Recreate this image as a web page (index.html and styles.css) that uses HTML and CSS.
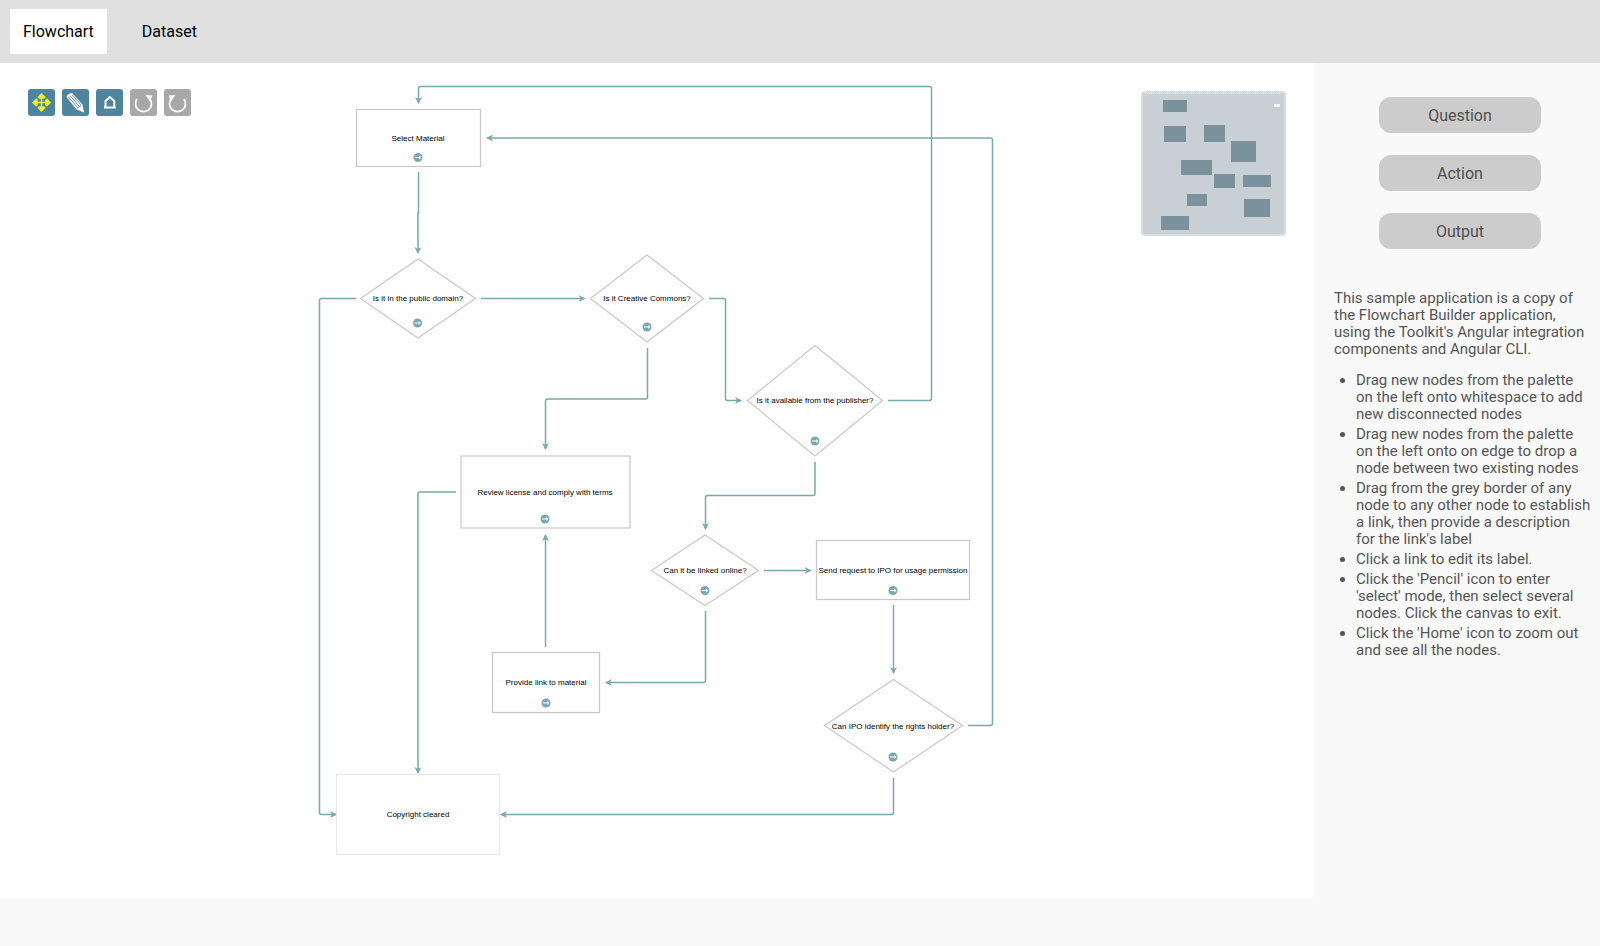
FILE: index.html
```html
<!DOCTYPE html>
<html lang="en">
<head>
<meta charset="utf-8">
<title>Flowchart Builder</title>
<link rel="stylesheet" href="styles.css">
</head>
<body>
<nav class="tabs">
  <a class="tab tab-active" href="#flowchart">Flowchart</a>
  <a class="tab" href="#dataset">Dataset</a>
</nav>
<div class="workspace">
  <main class="canvas">
    <svg class="diagram" role="img" aria-label="Copyright clearance flowchart">
      <defs>
        <marker id="arrow" markerWidth="8" markerHeight="8" refX="6" refY="4" orient="auto" markerUnits="userSpaceOnUse">
          <path class="arrow-head" d="M0 .5L7 4L0 7.500L2 4Z"/>
        </marker>
        <g id="connect">
          <circle class="connect-disc" r="4.5"/>
          <path class="connect-arrow" d="M-3 0H2M1 -1.5L3 0L1 1.5"/>
        </g>
      </defs>
      <g class="edges" transform="translate(0 -63)">
        <path d="M888 400.5H929.5Q931.5 400.5 931.5 398.5V88.500Q931.5 86.500 929.5 86.500H420.500Q418.500 86.500 418.500 88.500V103"/>
        <path d="M968 725.5H990.5Q992.5 725.5 992.5 723.5V140Q992.5 138 990.5 138H487"/>
        <path d="M418.500 172V213H418V253"/>
        <path d="M356 298.5H321.500Q319.500 298.5 319.500 300.5V812.5Q319.500 814.5 321.500 814.5H336"/>
        <path d="M481 298.5H584.500"/>
        <path d="M647.500 348V397Q647.500 399 645.500 399H547.500Q545.500 399 545.500 401V449"/>
        <path d="M709 298.5H723.500Q725.500 298.5 725.500 300.5V398.5Q725.500 400.5 727.500 400.5H741"/>
        <path d="M815 462V493.5Q815 495.5 813 495.5H707.500Q705.500 495.5 705.500 497.5V529"/>
        <path d="M456 492H420Q418 492 418 494V773"/>
        <path d="M545.500 647V535"/>
        <path d="M764 570.500H810.500"/>
        <path d="M705.500 611V680.500Q705.500 682.500 703.500 682.500H606"/>
        <path d="M893.500 605V673"/>
        <path d="M893.500 778V812.5Q893.500 814.5 891.500 814.5H501"/>
      </g>
      <g class="nodes" transform="translate(0 -63)">
        <rect x="356.500" y="109.500" width="124" height="57"/>
        <path d="M418 259L475.500 298.500L418 338L360.500 298.500Z"/>
        <path d="M647 255L703.500 298.500L647 342L590.500 298.500Z"/>
        <path d="M815 345.500L882.500 400.500L815 456L747.500 400.500Z"/>
        <rect x="461" y="456" width="169" height="72"/>
        <rect x="492.500" y="652.500" width="107" height="60"/>
        <path d="M705 535L758.500 570.500L705 605.500L651.500 570.500Z"/>
        <rect x="816.500" y="540.500" width="153" height="59"/>
        <path d="M893.500 679.500L962.500 725.500L893.500 772L824.500 725.500Z"/>
        <rect class="output-node" x="336.500" y="774.500" width="163" height="80"/>
      </g>
      <g transform="translate(0 -63)">
        <use href="#connect" x="418" y="157.500"/>
        <use href="#connect" x="417.500" y="323"/>
        <use href="#connect" x="647" y="327"/>
        <use href="#connect" x="815" y="441"/>
        <use href="#connect" x="545" y="519"/>
        <use href="#connect" x="546" y="703"/>
        <use href="#connect" x="705" y="590.500"/>
        <use href="#connect" x="893" y="590.500"/>
        <use href="#connect" x="893" y="757"/>
      </g>
      <g class="labels" transform="translate(0 -60)">
        <text x="418" y="138">Select Material</text>
        <text x="418" y="298">Is it in the public domain?</text>
        <text x="647" y="298">Is it Creative Commons?</text>
        <text x="815" y="400">Is it available from the publisher?</text>
        <text x="545" y="492">Review license and comply with terms</text>
        <text x="546" y="682">Provide link to material</text>
        <text x="705" y="570">Can it be linked online?</text>
        <text x="893" y="570">Send request to IPO for usage permission</text>
        <text x="893" y="726">Can IPO identify the rights holder?</text>
        <text x="418" y="814">Copyright cleared</text>
      </g>
    </svg>
    <div class="toolbar">
      <button class="tool" type="button" aria-label="Pan">
        <svg viewBox="0 0 27 27"><path fill="none" stroke="#e6f02d" stroke-width="1.500" d="M13.500 7V20M7 13.500H20"/><path fill="#e6f02d" d="M13.500 4L17.500 8Q17.500 9.800 15.500 9.800H11.500Q9.500 9.800 9.500 8ZM13.500 23L17.500 19Q17.500 17.200 15.500 17.200H11.500Q9.500 17.200 9.500 19ZM4 13.500L8 9.500Q9.800 9.500 9.800 11.500V15.500Q9.800 17.500 8 17.500ZM23 13.500L19 9.500Q17.200 9.500 17.200 11.500V15.500Q17.200 17.500 19 17.500Z"/></svg>
      </button>
      <button class="tool" type="button" aria-label="Pencil">
        <svg viewBox="0 0 27 27"><path fill="#fff" d="M4.500 8Q5.500 4.500 10 4L20.500 15.500L22 23.500L14.500 20.500Z"/><path fill="none" stroke="#4f849f" stroke-width=".9" d="M6.500 8L15.500 18.500M8.300 6.800L17 17M10.300 5.800L18.800 15.800M15.500 19.500Q16.500 17.500 19.500 16.500"/></svg>
      </button>
      <button class="tool" type="button" aria-label="Home">
        <svg viewBox="0 0 27 27"><path fill="none" stroke="#fff" stroke-width="2" d="M9.500 18.500V12L13.800 8L18.200 12V18.500ZM8 18.500H19.800"/></svg>
      </button>
      <button class="tool tool-off" type="button" aria-label="Undo">
        <svg viewBox="0 0 27 27"><path fill="none" stroke="#fff" stroke-width="1.800" d="M7 10A8 8 0 1 0 20 10"/><path fill="#fff" d="M15.500 6L22.500 6.500L20 12.500Z"/></svg>
      </button>
      <button class="tool tool-off" type="button" aria-label="Redo">
        <svg viewBox="0 0 27 27"><path fill="none" stroke="#fff" stroke-width="1.800" d="M20 10A8 8 0 1 1 7 10"/><path fill="#fff" d="M11.500 6L4.500 6.500L7 12.500Z"/></svg>
      </button>
    </div>
    <div class="minimap">
      <svg viewBox="0 0 140 140" aria-hidden="true">
        <path class="minimap-view" d="M2 .5H138"/>
        <path fill="#7b919b" d="M20 7h24v12h-24zM21 33h22v16h-22zM61 32h21v17h-21zM88 48h25v21h-25zM38 67h31v15h-31zM71 81h21v14h-21zM100 82h28v12h-28zM44 101h20v12h-20zM101 106h26v18h-26zM18 123h28v14h-28z"/>
        <rect x="131" y="11" width="6" height="3" fill="#f5f5f5"/>
      </svg>
    </div>
  </main>
  <aside class="sidebar">
    <div class="palette">
      <button class="palette-item" type="button">Question</button>
      <button class="palette-item" type="button">Action</button>
      <button class="palette-item" type="button">Output</button>
    </div>
    <div class="description">
      <p>This sample application is a copy of the Flowchart Builder application, using the Toolkit's Angular integration components and Angular CLI.</p>
      <ul>
        <li>Drag new nodes from the palette on the left onto whitespace to add new disconnected nodes</li>
        <li>Drag new nodes from the palette on the left onto on edge to drop a node between two existing nodes</li>
        <li>Drag from the grey border of any node to any other node to establish a link, then provide a description for the link's label</li>
        <li>Click a link to edit its label.</li>
        <li>Click the 'Pencil' icon to enter 'select' mode, then select several nodes. Click the canvas to exit.</li>
        <li>Click the 'Home' icon to zoom out and see all the nodes.</li>
      </ul>
    </div>
  </aside>
</div>
</body>
</html>
```
FILE: styles.css
```css
* { box-sizing: border-box; }
body {
  margin: 0;
  min-height: 100vh;
  display: flex;
  flex-direction: column;
  padding-bottom: 48px;
  background: #f9f9f9;
  color: #555;
  font-family: Roboto, sans-serif;
}
.tabs {
  display: flex;
  gap: 22px;
  padding: 9px 10px;
  background: #e0e0e0;
}
.tab {
  padding: 0 13px;
  font-size: 16px;
  line-height: 45px;
  color: #000;
  text-decoration: none;
}
.tab-active { background: #fff; }
.workspace { flex: 1; display: flex; }
.canvas { position: relative; flex: 1; background: #fff; }
.diagram { position: absolute; width: 100%; height: 100%; }
.edges path { fill: none; stroke: #7aa8b1; stroke-width: 1.5; marker-end: url(#arrow); }
.arrow-head { fill: #7aa8b1; }
.nodes { fill: #fff; stroke: #c8c8c8; stroke-width: 1.2; }
.output-node { stroke: #e8e8e8; }
.connect-disc { fill: #7aa8b1; }
.connect-arrow { fill: none; stroke: #fff; }
.labels { font: 8px "Liberation Sans", Arial, sans-serif; text-anchor: middle; fill: #000; }
.toolbar { position: absolute; top: 26px; left: 28px; display: flex; gap: 7px; }
.tool {
  width: 27px;
  height: 27px;
  padding: 0;
  border: 0;
  border-radius: 3px;
  background: #4f849f;
}
.tool svg { display: block; }
.tool-off { background: #a8a8a8; }
.minimap {
  position: absolute;
  top: 28px;
  right: 28px;
  width: 145px;
  height: 145px;
  border: 2px solid #d8dee0;
  border-radius: 4px;
  background: #c8d0d5;
}
.minimap svg { display: block; width: 140px; height: 140px; }
.minimap-view { stroke: #fff; stroke-dasharray: 1 1; }
.sidebar { width: 286px; padding: 34px 8px 0 20px; }
.palette { display: flex; flex-direction: column; align-items: center; gap: 22px; margin-right: 6px; }
.palette-item {
  width: 162px;
  height: 36px;
  padding: 0;
  border: 0;
  border-radius: 12px;
  background: #ccc;
  color: #4f4f4f;
  font: 16px Roboto, sans-serif;
}
.description { margin-top: 41px; font-size: 15px; line-height: 17px; }
.description p { margin: 0 0 14px; }
.description ul { margin: 0; padding-left: 22px; }
.description li { margin-bottom: 3px; }
```
